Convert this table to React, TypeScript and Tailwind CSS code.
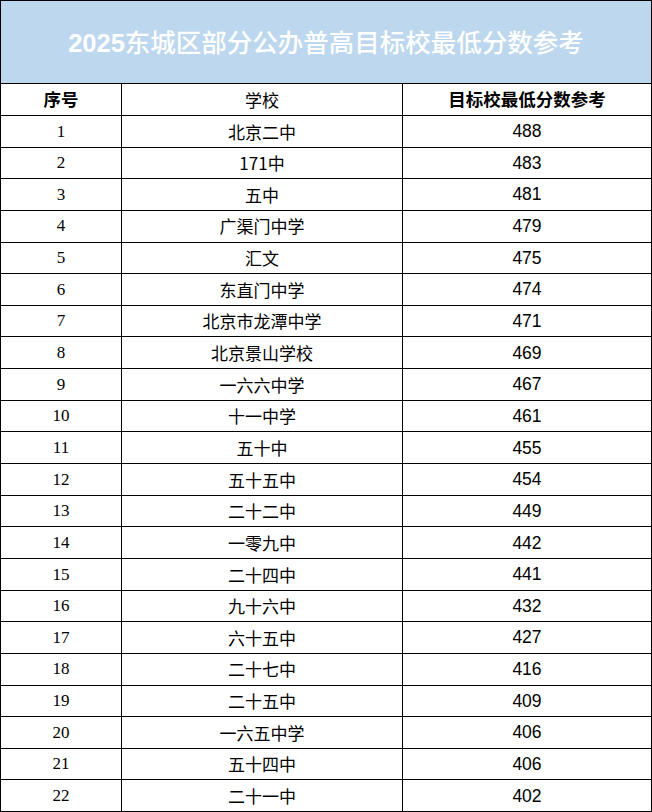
const rows: [string, string][] = [
  ['北京二中', '488'],
  ['171中', '483'],
  ['五中', '481'],
  ['广渠门中学', '479'],
  ['汇文', '475'],
  ['东直门中学', '474'],
  ['北京市龙潭中学', '471'],
  ['北京景山学校', '469'],
  ['一六六中学', '467'],
  ['十一中学', '461'],
  ['五十中', '455'],
  ['五十五中', '454'],
  ['二十二中', '449'],
  ['一零九中', '442'],
  ['二十四中', '441'],
  ['九十六中', '432'],
  ['六十五中', '427'],
  ['二十七中', '416'],
  ['二十五中', '409'],
  ['一六五中学', '406'],
  ['五十四中', '406'],
  ['二十一中', '402'],
];

const cjk = "font-['Noto_Sans_CJK_SC',sans-serif]";

export default function App() {
  return (
    <div className="w-[652px] h-[812px] bg-white border-x border-t border-black box-border overflow-hidden">
      <div className="h-[83px] bg-[#bdd7ee] border-b border-black box-border flex items-center justify-center">
        <h1 className="text-[25.5px] leading-none text-white whitespace-nowrap">
          <span className="font-bold font-['Liberation_Sans',sans-serif]">2025</span>
          <span className={`${cjk} font-medium`}>东城区部分公办普高目标校最低分数参考</span>
        </h1>
      </div>

      <div className={`grid grid-cols-[121px_281px_1fr] h-[32px] border-b border-black box-border text-black ${cjk}`}>
        <div className="flex items-center justify-center border-r border-black text-[17.5px] font-bold">序号</div>
        <div className="flex items-center justify-center border-r border-black text-[17px]">学校</div>
        <div className="flex items-center justify-center text-[17.5px] font-bold">目标校最低分数参考</div>
      </div>

      {rows.map(([school, score], i) => (
        <div
          key={i}
          className="grid grid-cols-[121px_281px_1fr] h-[31.65px] border-b border-black box-border text-black"
        >
          <div className="flex items-center justify-center border-r border-black text-[17px] font-['Liberation_Serif',serif]">
            {i + 1}
          </div>
          <div className={`flex items-center justify-center border-r border-black text-[17px] ${cjk}`}>
            {school}
          </div>
          <div className="flex items-center justify-center text-[17.5px] font-['Liberation_Sans',sans-serif]">
            {score}
          </div>
        </div>
      ))}
    </div>
  );
}
